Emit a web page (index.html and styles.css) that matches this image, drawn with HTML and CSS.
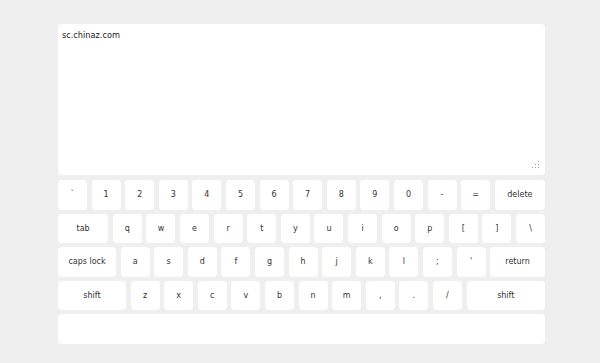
FILE: index.html
```html
<!DOCTYPE html>
<html lang="en">
<head>
<meta charset="UTF-8">
<meta name="viewport" content="width=device-width, initial-scale=1.0">
<title>Keyboard</title>
<link rel="stylesheet" href="styles.css">
</head>
<body>
  <div class="container">
    <!-- text output -->
    <div class="write">
      <div class="write-text">sc.chinaz.com</div>
      <svg class="grip" width="9" height="9" viewBox="0 0 9 9">
        <rect x="7" y="0" width="1" height="1"/>
        <rect x="4" y="3" width="1" height="1"/>
        <rect x="7" y="3" width="1" height="1"/>
        <rect x="1" y="6" width="1" height="1"/>
        <rect x="4" y="6" width="1" height="1"/>
        <rect x="7" y="6" width="1" height="1"/>
      </svg>
    </div>
    <!-- keyboard rows -->
    <ul class="keyboard">
      <li class="row">
        <span class="key">`</span>
        <span class="key">1</span>
        <span class="key">2</span>
        <span class="key">3</span>
        <span class="key">4</span>
        <span class="key">5</span>
        <span class="key">6</span>
        <span class="key">7</span>
        <span class="key">8</span>
        <span class="key">9</span>
        <span class="key">0</span>
        <span class="key">-</span>
        <span class="key">=</span>
        <span class="key wide">delete</span>
      </li>
      <li class="row">
        <span class="key wide">tab</span>
        <span class="key">q</span>
        <span class="key">w</span>
        <span class="key">e</span>
        <span class="key">r</span>
        <span class="key">t</span>
        <span class="key">y</span>
        <span class="key">u</span>
        <span class="key">i</span>
        <span class="key">o</span>
        <span class="key">p</span>
        <span class="key">[</span>
        <span class="key">]</span>
        <span class="key">\</span>
      </li>
      <li class="row">
        <span class="key caps">caps lock</span>
        <span class="key">a</span>
        <span class="key">s</span>
        <span class="key">d</span>
        <span class="key">f</span>
        <span class="key">g</span>
        <span class="key">h</span>
        <span class="key">j</span>
        <span class="key">k</span>
        <span class="key">l</span>
        <span class="key">;</span>
        <span class="key">'</span>
        <span class="key wide">return</span>
      </li>
      <li class="row">
        <span class="key shift-left">shift</span>
        <span class="key">z</span>
        <span class="key">x</span>
        <span class="key">c</span>
        <span class="key">v</span>
        <span class="key">b</span>
        <span class="key">n</span>
        <span class="key">m</span>
        <span class="key">,</span>
        <span class="key">.</span>
        <span class="key">/</span>
        <span class="key wide">shift</span>
      </li>
      <li class="row">
        <span class="key space"></span>
      </li>
    </ul>
  </div>
</body>
</html>
```

FILE: styles.css
```css
body {
  margin: 0;
  background: #efefef;
  font-family: "DejaVu Sans", Verdana, sans-serif;
  font-size: 8px;
  color: #333;
}
.container {
  width: 487px;
  margin: 24px 0 0 58px;
}
.write {
  position: relative;
  height: 151px;
  background: #fff;
  border-radius: 4px;
  box-sizing: border-box;
  padding: 6px 4px;
  margin-bottom: 5px;
}
.write-text {
  font-size: 8.2px;
  color: #222;
}
.grip {
  position: absolute;
  right: 5px;
  bottom: 5px;
  fill: #999;
}
.keyboard {
  list-style: none;
  margin: 0;
  padding: 0;
  display: flex;
  flex-direction: column;
  gap: 4px;
}
.row {
  display: flex;
  gap: 4.6px;
}
.key {
  flex: 0 0 29px;
  height: 29.5px;
  background: #fff;
  border-radius: 4px;
  display: flex;
  align-items: center;
  justify-content: center;
}
.wide {
  flex: 1 1 auto;
}
.caps {
  flex: 0 0 58px;
}
.shift-left {
  flex: 0 0 68px;
}
.space {
  flex: 1 1 auto;
}
```
